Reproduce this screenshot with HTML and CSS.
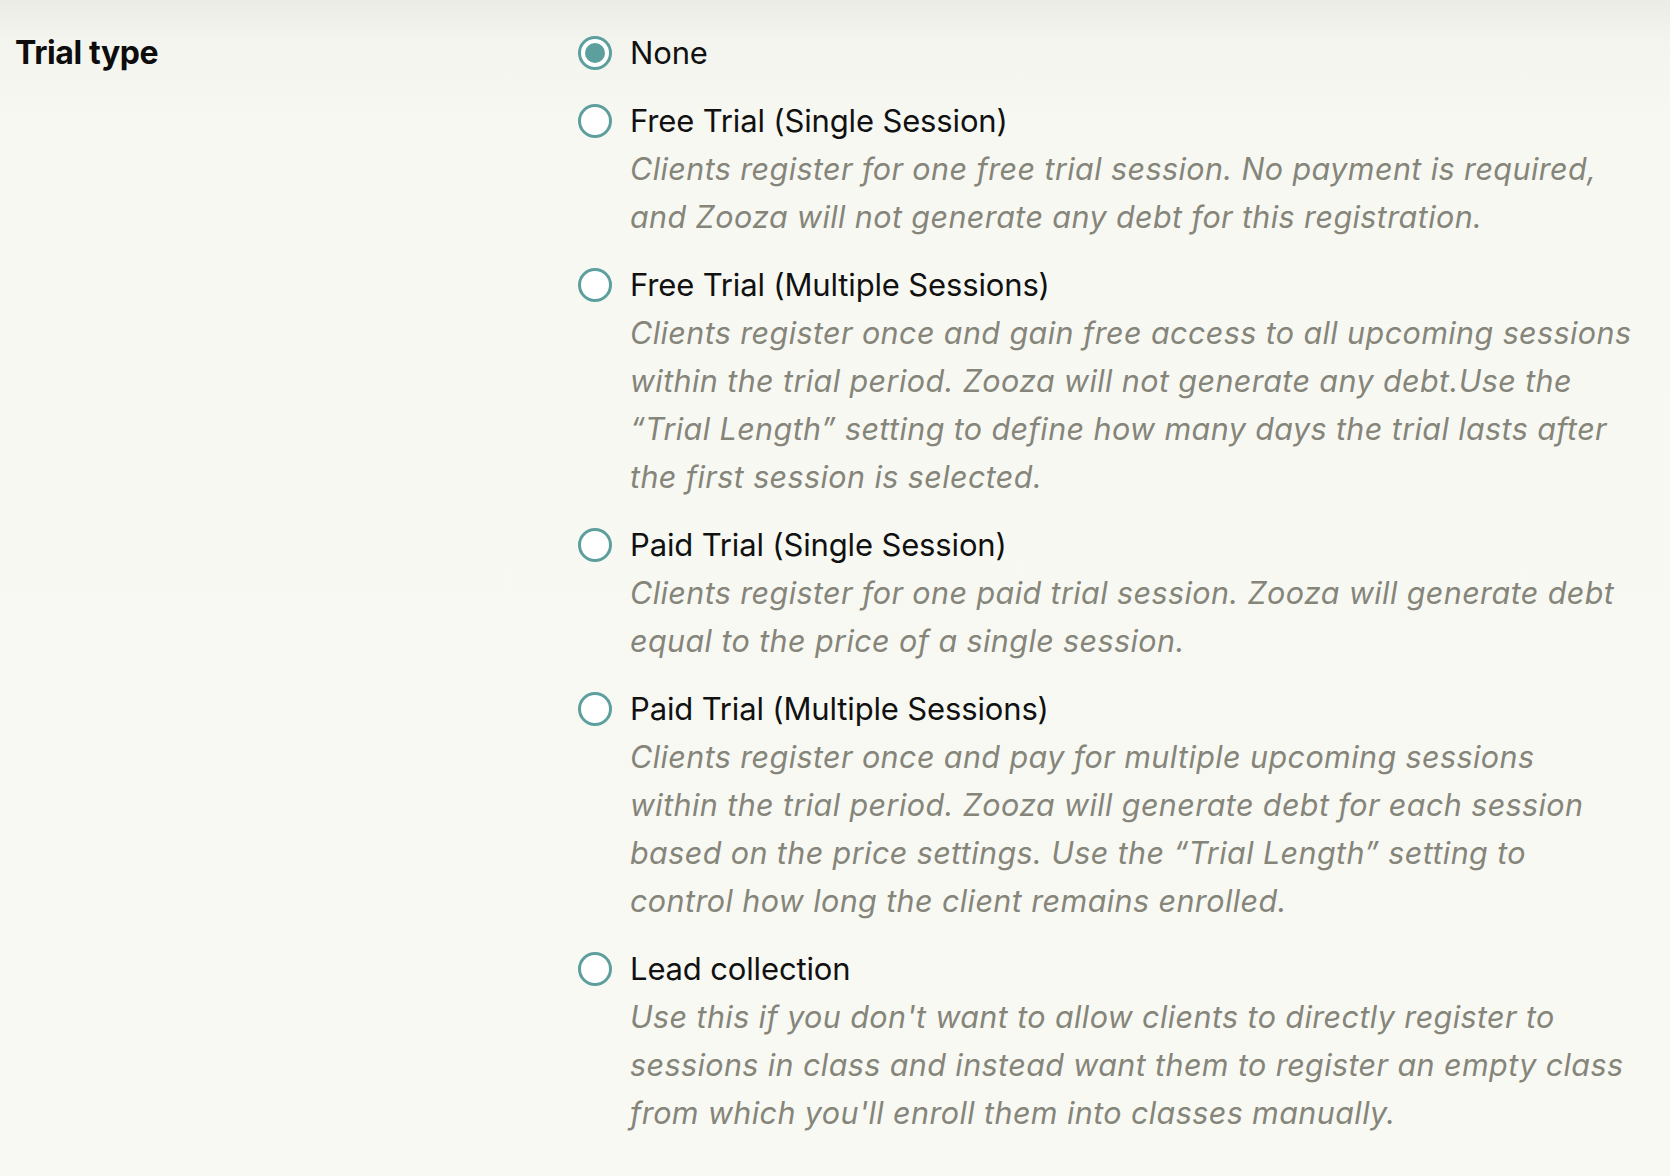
FILE: index.html
```html
<!DOCTYPE html>
<html lang="en">
<head>
<meta charset="utf-8">
<title>Trial type</title>
<link rel="stylesheet" href="styles.css">
</head>
<body>
<div class="page">
  <section class="field">
    <div class="field-label">Trial type</div>
    <div class="options">
      <label class="option">
        <span class="radio checked"></span>
        <span class="option-body">
          <span class="option-title">None</span>
        </span>
      </label>
      <label class="option">
        <span class="radio"></span>
        <span class="option-body">
          <span class="option-title">Free Trial (Single Session)</span>
          <span class="option-desc">Clients register for one free trial session. No payment is required, and Zooza will not generate any debt for this registration.</span>
        </span>
      </label>
      <label class="option">
        <span class="radio"></span>
        <span class="option-body wide">
          <span class="option-title">Free Trial (Multiple Sessions)</span>
          <span class="option-desc">Clients register once and gain free access to all upcoming sessions<br>within the trial period. Zooza will not generate any debt.Use the “Trial Length” setting to define how many days the trial lasts after the first session is selected.</span>
        </span>
      </label>
      <label class="option">
        <span class="radio"></span>
        <span class="option-body">
          <span class="option-title">Paid Trial (Single Session)</span>
          <span class="option-desc">Clients register for one paid trial session. Zooza will generate debt equal to the price of a single session.</span>
        </span>
      </label>
      <label class="option">
        <span class="radio"></span>
        <span class="option-body">
          <span class="option-title">Paid Trial (Multiple Sessions)</span>
          <span class="option-desc">Clients register once and pay for multiple upcoming sessions within the trial period. Zooza will generate debt for each session based on the price settings. Use the “Trial Length” setting to control how long the client remains enrolled.</span>
        </span>
      </label>
      <label class="option">
        <span class="radio"></span>
        <span class="option-body">
          <span class="option-title">Lead collection</span>
          <span class="option-desc">Use this if you don't want to allow clients to directly register to sessions in class and instead want them to register an empty class from which you'll enroll them into classes manually.</span>
        </span>
      </label>
    </div>
  </section>
</div>
</body>
</html>
```
FILE: styles.css
```css
html, body {
  margin: 0;
  padding: 0;
}
body {
  width: 1670px;
  height: 1176px;
  overflow: hidden;
  background: linear-gradient(to bottom, #ececE7 0px, #f4f4ef 40px, #f8f8f3 120px, #f9f9f4 100%);
  font-family: Inter, "Noto Sans", sans-serif;
  color: #111;
}
.page {
  padding: 29px 30px 0 15px;
}
.field {
  display: grid;
  grid-template-columns: 563px 1fr;
}
.field-label {
  font-weight: 700;
  font-size: 32px;
  line-height: 48px;
  letter-spacing: -0.4px;
  color: #0d0d0d;
}
.options {
  display: flex;
  flex-direction: column;
  gap: 20px;
}
.option {
  display: flex;
  align-items: flex-start;
  gap: 18px;
  cursor: pointer;
}
.radio {
  flex: none;
  width: 34px;
  height: 34px;
  margin-top: 7px;
  box-sizing: border-box;
  border-radius: 50%;
  border: 3.5px solid #5c9f9c;
  background: #ffffff;
  display: flex;
  align-items: center;
  justify-content: center;
}
.radio.checked::after {
  content: "";
  width: 20px;
  height: 20px;
  border-radius: 50%;
  background: #5c9f9c;
}
.option-body {
  display: flex;
  flex-direction: column;
  max-width: 999px;
}
.option-body.wide {
  max-width: 1010px;
}
.option-title {
  font-size: 31px;
  line-height: 48px;
  color: #111;
  letter-spacing: -0.15px;
}
.option-desc {
  font-size: 30.5px;
  line-height: 48px;
  font-style: italic;
  color: #85857a;
  letter-spacing: 0.4px;
}
```
